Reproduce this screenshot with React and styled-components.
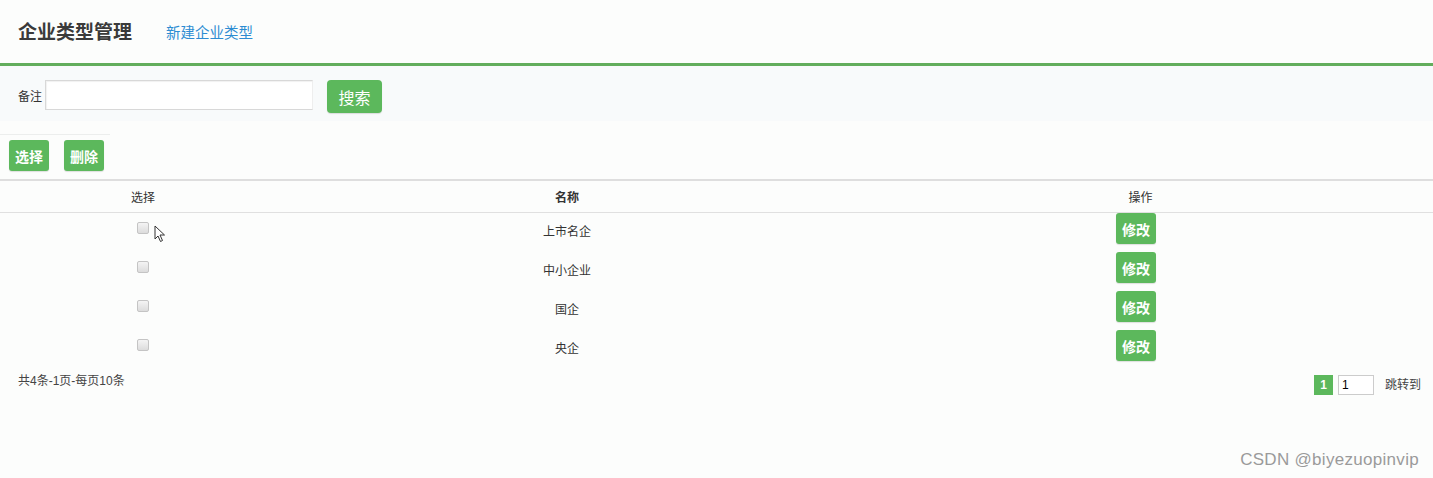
import React, { useState } from 'react';
import styled, { createGlobalStyle } from 'styled-components';

const GREEN = '#5cb85c';

const GlobalStyle = createGlobalStyle`
  html, body {
    margin: 0;
    padding: 0;
    background: #fcfdfc;
  }
  body {
    font-family: "Liberation Sans", "Noto Sans CJK SC", sans-serif;
    color: #333;
  }
`;

const Page = styled.div`
  position: relative;
  width: 1433px;
  height: 478px;
  overflow: hidden;
  background: #fcfdfc;
`;

// page head with title + create link
const Header = styled.div`
  display: flex;
  align-items: center;
  height: 63px;
  padding-left: 18px;
  border-bottom: 3px solid #62ad5c;
`;

const Title = styled.h1`
  margin: 0 0 3px;
  font-size: 19px;
  font-weight: bold;
  color: #3a3a3a;
`;

const CreateLink = styled.a`
  margin-left: 34px;
  font-size: 14.5px;
  color: #2d8cd2;
  text-decoration: none;
`;

const SearchBar = styled.div`
  display: flex;
  align-items: flex-start;
  height: 41px;
  padding: 14px 0 0 18px;
  background: #f8fafb;
`;

const Label = styled.label`
  font-size: 12px;
  color: #333;
  margin-top: 7px;
`;

const TextInput = styled.input`
  box-sizing: border-box;
  width: 268px;
  height: 30px;
  margin-left: 3px;
  border: 1px solid #d8d8d8;
  border-right-color: #eee;
  box-shadow: inset 1px 1px 1px rgba(0, 0, 0, 0.06);
  background: #fff;
  outline: none;
`;

const Button = styled.button`
  border: none;
  border-radius: ${p => (p.$big ? '4px' : '3px')};
  background: ${GREEN};
  color: #fff;
  font-family: inherit;
  font-size: ${p => (p.$big ? '16px' : '14px')};
  font-weight: ${p => (p.$big ? 'normal' : 'bold')};
  width: ${p => p.$w || 40}px;
  height: ${p => p.$h || 31}px;
  padding: 0;
  cursor: pointer;
  box-shadow: 0 1px 1px rgba(0, 0, 0, 0.12);
`;

const SearchButton = styled(Button)`
  margin-left: 14px;
`;

const Toolbar = styled.div`
  display: flex;
  gap: 15px;
  width: 101px;
  padding: 5px 0 8px 9px;
  border-top: 1px solid #eceeed;
  margin-top: 13px;
`;

const Table = styled.div`
  border-top: 2px solid #dedede;
`;

const Row = styled.div`
  display: grid;
  grid-template-columns: 286px 562px 1fr;
  align-items: center;
  height: ${p => (p.$head ? '31px' : '39px')};
  border-bottom: ${p => (p.$head ? '1px solid #e0e0e0' : 'none')};
  font-size: 12px;
  color: #333;
`;

const Cell = styled.div`
  display: flex;
  justify-content: center;
  align-items: center;
  margin-top: ${p => p.$shift || 0}px;
  padding-right: ${p => p.$pull || 0}px;
`;

const HeadText = styled.span`
  font-weight: ${p => (p.$bold ? 'bold' : 'normal')};
`;

const Check = styled.input.attrs({ type: 'checkbox' })`
  width: 12px;
  height: 12px;
  margin: 0;
  margin-top: -10px;
  appearance: none;
  border: 1px solid #c4c4c4;
  border-radius: 2px;
  background: linear-gradient(#f4f4f4, #dcdcdc);
`;

const Footer = styled.div`
  display: flex;
  justify-content: space-between;
  align-items: flex-start;
  padding: 5px 12px 0 18px;
  font-size: 12px;
  line-height: 14px;
  color: #444;
`;

const Pager = styled.div`
  display: flex;
  align-items: center;
  margin-top: 1px;
`;

const PageNum = styled.span`
  display: inline-flex;
  justify-content: center;
  align-items: center;
  width: 19px;
  height: 20px;
  background: ${GREEN};
  color: #fff;
  font-weight: bold;
  font-size: 12px;
`;

const PageInput = styled.input`
  box-sizing: border-box;
  width: 36px;
  height: 20px;
  margin-left: 5px;
  padding: 0 3px;
  border: 1px solid #ccc;
  font-size: 12px;
  font-family: inherit;
`;

const Jump = styled.span`
  margin-left: 11px;
  color: #444;
`;

const Watermark = styled.div`
  position: absolute;
  right: 14px;
  bottom: 8px;
  font-size: 17px;
  color: #9a9a9a;
  letter-spacing: 0.3px;
  text-shadow: 0 0 2px #fff;
`;

const Pointer = styled.svg`
  position: absolute;
  left: 154px;
  top: 225px;
`;

const rows = ['上市名企', '中小企业', '国企', '央企'];

export default function App() {
  const [checked, setChecked] = useState({});

  return (
    <Page>
      <GlobalStyle />
      <Header>
        <Title>企业类型管理</Title>
        <CreateLink href="#">新建企业类型</CreateLink>
      </Header>

      <SearchBar>
        <Label>备注</Label>
        <TextInput />
        <SearchButton $big $w={55} $h={33}>搜索</SearchButton>
      </SearchBar>

      <Toolbar>
        <Button>选择</Button>
        <Button>删除</Button>
      </Toolbar>

      <Table>
        <Row $head>
          <Cell><HeadText>选择</HeadText></Cell>
          <Cell><HeadText $bold>名称</HeadText></Cell>
          <Cell><HeadText>操作</HeadText></Cell>
        </Row>
        {rows.map((name, i) => (
          <Row key={i}>
            <Cell>
              <Check
                checked={!!checked[i]}
                onChange={() => setChecked({ ...checked, [i]: !checked[i] })}
              />
            </Cell>
            <Cell $shift={-4}>{name}</Cell>
            <Cell $shift={-8} $pull={9}><Button>修改</Button></Cell>
          </Row>
        ))}
      </Table>

      <Footer>
        <span>共4条-1页-每页10条</span>
        <Pager>
          <PageNum>1</PageNum>
          <PageInput defaultValue="1" />
          <Jump>跳转到</Jump>
        </Pager>
      </Footer>

      {/* mouse pointer seen in the capture */}
      <Pointer width="12" height="18" viewBox="0 0 12 18">
        <path d="M1 1 L1 14 L4 11 L6.5 16.5 L8.5 15.5 L6 10 L10.5 10 Z" fill="#fff" stroke="#333" strokeWidth="1" strokeLinejoin="round" />
      </Pointer>

      <Watermark>CSDN @biyezuopinvip</Watermark>
    </Page>
  );
}
